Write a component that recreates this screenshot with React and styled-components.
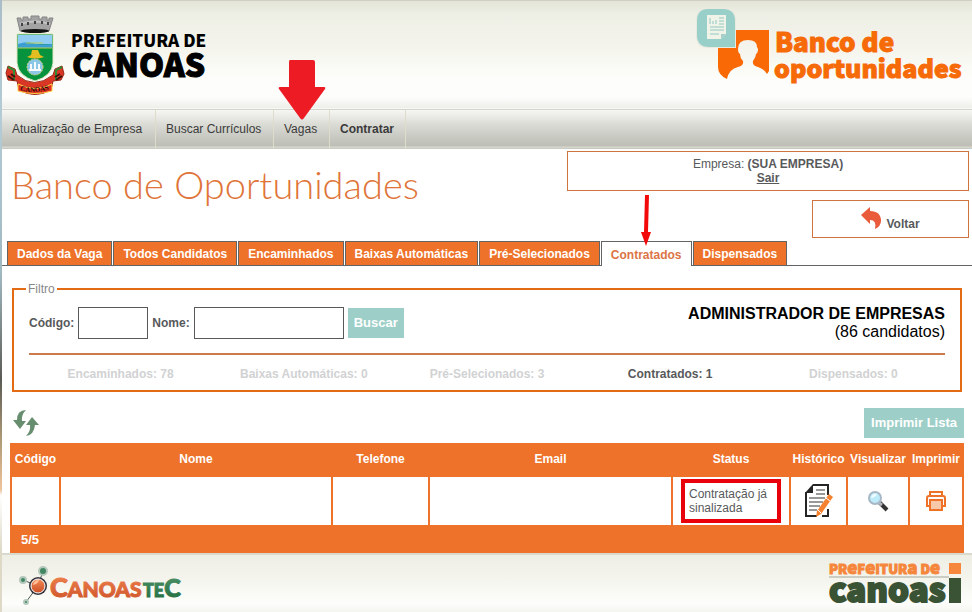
import React from "react";
import styled, { createGlobalStyle, css } from "styled-components";

const orange = "#ee7229";
const teal = "#9dcfc8";
const logoFont = '"Noto Sans CJK SC", "Open Sans", sans-serif';

const GlobalStyle = createGlobalStyle`
  * { box-sizing: border-box; }
  body {
    margin: 0;
    background: #fff;
    color: #58595b;
    font: 12px/14px "Liberation Sans", Arial, sans-serif;
  }
`;

const Page = styled.div`
  min-height: 100vh;
  padding-left: 2px;
  display: flex;
  flex-direction: column;
  background: linear-gradient(
      #a9bdc9 0%, #b5ccd6 20%, #9fb7bf 45%, #5b5b55 62%, #b09a78 72%, #efc49c 80%, #fff 81%, #ddd9c6 90%
    ) left / 2px 100% no-repeat, #fff;
`;

const Header = styled.header`
  height: 110px;
  padding: 0 8px 0 2px;
  display: flex;
  justify-content: space-between;
  border-top: 1px solid #cfcfc6;
  border-bottom: 1px solid #d4d4ca;
  background: linear-gradient(#e4e5d8 0, #edeee4 12px, #f4f4ec 45px, #fdfdfb 78px, #fdfdfc 96px, #eeeeea 107px, #fff 108px);
`;

const LogoLink = styled.a`
  display: block;
  line-height: 0;
`;

const Drawing = styled.svg`
  display: block;
  overflow: visible;
`;

const Nav = styled.nav`
  height: 39px;
  display: flex;
  background: linear-gradient(#f6f6f4 0, #deded9 13px, #cfd0c9 22px, #bebfb6 35px, #bebfb6 36px, #d9dad2 37px, #c5c6be 39px);
`;

const NavLink = styled.a`
  position: relative;
  min-width: ${(p) => p.$width}px;
  padding: 12px 10px 0;
  border-right: 1px solid #deddca;
  color: #3b3b3b;
  text-decoration: none;
  font-weight: ${(p) => (p.$bold ? "bold" : "normal")};
`;

const Pointer = styled.svg`
  position: absolute;
  left: 50%;
  bottom: ${(p) => p.$bottom};
  transform: translateX(-50%);
  pointer-events: none;
`;

const Main = styled.main`
  padding-top: 2px;
`;

const Intro = styled.section`
  display: flex;
  justify-content: space-between;
  padding: 0 3px 0 9px;
  height: 90px;
`;

const Title = styled.h1`
  margin: 13px 0 0;
  color: #e07438;
  font: 300 38px/40px Lato, sans-serif;
  white-space: nowrap;
`;

const Account = styled.div`
  flex: 0 1 402px;
  display: flex;
  flex-direction: column;
  align-items: flex-end;
  gap: 9px;
`;

const outlined = css`
  border: 1px solid #d0743f;
  background: #fff;
  color: #58595b;
`;

const Company = styled.div`
  ${outlined}
  width: 100%;
  height: 40px;
  padding-top: 5px;
  text-align: center;
`;

const Logout = styled.a`
  color: inherit;
  font-weight: bold;
`;

const BackButton = styled.button`
  ${outlined}
  width: 157px;
  height: 38px;
  padding: 0;
  display: flex;
  justify-content: center;
  align-items: center;
  gap: 4px;
  font: bold 12px/14px "Liberation Sans", Arial, sans-serif;
  cursor: pointer;
`;

const BackLabel = styled.span`
  padding-top: 10px;
`;

const Tabs = styled.nav`
  display: flex;
  gap: 1px;
  padding-left: 5px;
  border-bottom: 1px solid #636466;
`;

const Tab = styled.a`
  position: relative;
  height: 24px;
  padding: 5px 9px 0;
  border: 1px solid #636466;
  border-bottom: 0;
  background: ${orange};
  color: #fff;
  font-weight: bold;
  text-decoration: none;
  white-space: nowrap;
  ${(p) =>
    p.$active &&
    css`
      height: 25px;
      margin-bottom: -1px;
      padding-top: 6px;
      background: #fff;
      color: #dc7446;
    `}
`;

const Filter = styled.fieldset`
  margin: 16px 10px 0;
  min-width: 0;
  padding: 0 15px 9px;
  border: 2px solid #e36b14;
`;

const Legend = styled.legend`
  margin-left: -3px;
  padding: 0 2px;
  color: #87888a;
`;

const FilterRow = styled.div`
  display: flex;
  justify-content: space-between;
  padding: 9px 0 12px;
  border-bottom: 2px solid #cb7a4c;
`;

const Form = styled.form`
  display: flex;
  align-items: center;
  gap: 4px;
`;

const Label = styled.label`
  font-weight: bold;
`;

const TextBox = styled.input`
  width: ${(p) => p.$width}px;
  height: 32px;
  padding: 4px;
  border: 1px solid #58595b;
  font: inherit;
`;

const ActionButton = styled.button`
  height: 30px;
  padding: 0 6px;
  border: 0;
  background: ${teal};
  color: #fff;
  font: bold 13px/16px "Liberation Sans", Arial, sans-serif;
  cursor: pointer;
`;

const PrintButton = styled(ActionButton)`
  min-width: 100px;
`;

const Job = styled.div`
  color: #000;
  font-size: 16px;
  line-height: 18px;
  text-align: right;
`;

const JobName = styled.strong`
  display: block;
`;

const Counts = styled.ul`
  list-style: none;
  margin: 0;
  padding: 12px 0 0;
  display: grid;
  grid-template-columns: repeat(5, 1fr);
  text-align: center;
  font-weight: bold;
`;

const Count = styled.li`
  color: ${(p) => (p.$active ? "#58595b" : "#d1d2d3")};
`;

const Toolbar = styled.div`
  display: flex;
  align-items: center;
  justify-content: space-between;
  padding: 16px 8px 5px 11px;
`;

const IconButton = styled.button`
  display: inline-block;
  padding: 0;
  border: 0;
  background: none;
  vertical-align: middle;
  line-height: 0;
  cursor: pointer;
`;

const TableFrame = styled.div`
  padding: 0 8px;
`;

const Table = styled.table`
  width: 100%;
  table-layout: fixed;
  border-collapse: collapse;
  background: ${orange};
`;

const Column = styled.col`
  width: ${(p) => (p.$width ? `${p.$width}px` : "auto")};
`;

const Heading = styled.th`
  height: 33px;
  padding: 0;
  color: #fff;
  white-space: nowrap;
`;

const Cell = styled.td`
  height: 50px;
  padding: 0 8px;
  border: 2px solid ${orange};
  background: #fff;
  text-align: ${(p) => (p.$icon ? "center" : "left")};
  ${(p) => p.$icon && "padding: 0;"}
`;

const Status = styled.span`
  display: block;
  width: 100px;
  padding: 4px;
  border: 4px solid #e8000b;
`;

const Total = styled.td`
  height: 27px;
  padding: 0 10px;
  color: #fff;
  font-size: 13px;
  font-weight: bold;
`;

const Footer = styled.footer`
  flex: 1;
  min-height: 59px;
  padding: 0 10px 0 16px;
  display: flex;
  justify-content: space-between;
  border-top: 2px solid #d9dacd;
  background: linear-gradient(#edeee4, #f4f4ed 40%, #fdfdfb 85%, #f4f4f0);
`;

function CityLogo() {
  return (
    <Drawing width="204" height="100" viewBox="4 1 204 100" role="img" aria-label="Prefeitura de Canoas">
      <path d="M20 31 L17 18 h4 v2 h2 v-3 h5 v2 h3 v-3 h8 v3 h3 v-2 h5 v3 h2 v-2 h4 L49 31Z" fill="#a3a3a3" stroke="#858585" />
      <path d="M20 24 q15 -5 30 0" fill="none" stroke="#c4c4c4" strokeWidth="2" />
      <path d="M22 23v3m6-4v3m7-4v3m7-3v3m6-2v3" stroke="#444" strokeWidth="2" />
      <ellipse cx="35" cy="31" rx="14" ry="2" fill="#111" />
      <path d="M6 73 l2 -7 7 3 2 6 q17 15 36 0 l2 -6 7 -3 2 8 -3 6 -8 1 -2 9 q-16 9 -32 0 l-2 -9 -9 -1Z" fill="#d93625" stroke="#9b2a16" />
      <path d="M8 67 l6 3 v10 m48-13 -6 3 v10" fill="none" stroke="#328b35" strokeWidth="2" />
      <path d="M17 34h36v29q-1 13-18 18-17-5-18-18Z" fill="#07923d" stroke="#dfe7bb" />
      <path d="M18 35h34v9H18Z" fill="#91cdf3" />
      <path d="M18 44q8-3 14-1t20 1v4H18Z" fill="#3b9fd1" />
      <path d="M26 43h17M18 48h34" stroke="#b2ce57" strokeWidth="1" />
      <path d="M32 50h6l2 5 4 2q-9 3-17 0l4-2Z" fill="#e4bd20" />
      <circle cx="35" cy="67" r="8" fill="#8bc7e6" stroke="#d7cf75" strokeDasharray="2 1" />
      <path d="M31 70v-6m4 6v-8m4 8v-6M29 70h12" stroke="#f8fcff" strokeWidth="2" />
      <path d="M18 84q17 9 34 0v7q-17 5-34 0Z" fill="#e12f22" stroke="#ffd54a" />
      <path id="city-ribbon" d="M19 90q16 5 34-2" fill="none" />
      <text fontFamily="Liberation Serif, serif" fontSize="7" fontWeight="bold" fill="#241008">
        <textPath href="#city-ribbon" startOffset="1">CANOAS</textPath>
      </text>
      <path d="M8 76l6 4m1-3-4-3m51 2-6 4m-1-3 5-3" stroke="#3d120b" strokeWidth="2" />
      <g fill="#000" stroke="#000" fontFamily={logoFont} fontWeight="900">
        <text x="71" y="47" fontSize="17" strokeWidth="0">PREFEITURA DE</text>
        <text x="72" y="77" fontSize="32" strokeWidth="1">CANOAS</text>
      </g>
    </Drawing>
  );
}

function PortalLogo() {
  return (
    <Drawing width="267" height="80" viewBox="697 1 267 80" role="img" aria-label="Banco de oportunidades">
      <path d="M718 30h51v41l-2 3q-3-5-9-7-6-1-5-6 3-4 3-7 2-1 2-5l-1-2q0-7-9-7-10 0-10 9 0 4 2 5 0 4 3 7 1 5-5 6-9 2-11 12-9-4-9-12Z" fill="#f96a06" />
      <path d="M708 8h16q12 0 12 12v28h-28q-12 0-12-12V20q0-12 12-12Z" fill="#e8eadf" />
      <path d="M708 9h15q12 0 12 12v26h-26q-12 0-12-12V21q0-12 11-12Z" fill="#98cfc8" />
      <path d="M707 15h19v19l-5 5h-14Z" fill="#eff3e8" />
      <path d="M710 18v6m3-3v3m3-4v4m3-6h5m-5 3h5m-5 3h5m-14 3h14m-14 3h14m-14 4h9" fill="none" stroke="#91c9c2" />
      <path d="M721 39v-5h5Z" fill="#a7cec6" />
      <g fill="#f66a08" stroke="#f66a08" strokeWidth="1" fontFamily={logoFont} fontWeight="900">
        <text x="775" y="52" fontSize="26">Banco de</text>
        <text x="774" y="78" fontSize="25">oportunidades</text>
      </g>
    </Drawing>
  );
}

function TecLogo() {
  return (
    <Drawing width="164" height="57" viewBox="18 555 164 57" role="img" aria-label="CanoasTec">
      <defs>
        <linearGradient id="tec-orange" x1="0" y1="0" x2="0" y2="1">
          <stop stopColor="#f48b55" /><stop offset="1" stopColor="#cc4f25" />
        </linearGradient>
        <linearGradient id="tec-green" x1="0" y1="0" x2="0" y2="1">
          <stop stopColor="#53946b" /><stop offset="1" stopColor="#206c40" />
        </linearGradient>
      </defs>
      <path d="M38 586 43 571M38 586 23 580M38 586 26 602" stroke="#4b5650" />
      <circle cx="38" cy="586" r="9" fill="#34333b" />
      <circle cx="38" cy="586" r="7" fill="url(#tec-orange)" stroke="#fff" />
      <path d="M33 585q1-5 6-5-1 4-6 5" fill="#ffc29d" />
      <g fill="#418764" stroke="#b4c8bb" strokeWidth="2">
        <circle cx="43" cy="571" r="4" /><circle cx="23" cy="580" r="3" /><circle cx="26" cy="602" r="2" />
      </g>
      <g fontFamily="Lato, sans-serif" fontWeight="900" strokeWidth="1">
        <text x="50" y="597" fill="url(#tec-orange)" stroke="url(#tec-orange)">
          <tspan fontSize="27">C</tspan><tspan fontSize="21">ANOAS</tspan>
        </text>
        <text x="143" y="597" fill="url(#tec-green)" stroke="url(#tec-green)">
          <tspan fontSize="18">TE</tspan><tspan fontSize="25">C</tspan>
        </text>
      </g>
    </Drawing>
  );
}

function CityFooterLogo() {
  return (
    <Drawing width="134" height="57" viewBox="828 555 134 57" role="img" aria-label="Prefeitura de Canoas">
      <g fontFamily={logoFont} fontWeight="900">
        <text x="829" y="574" fontSize="13" fill="#f5863b" stroke="#f5863b" strokeWidth="1">
          PR<tspan fontSize="17">e</tspan>F<tspan fontSize="17">e</tspan>ITUR<tspan fontSize="17">a</tspan> D<tspan fontSize="17">e</tspan>
        </text>
        <text x="829" y="602" fontSize="33" fill="#3b5335" stroke="#3b5335" strokeWidth="2">canoas</text>
      </g>
      <path d="M829 577h120" stroke="#a2a69a" />
      <path d="M949 563h12v11h-12Z" fill="#f5863b" />
      <path d="M949 578h12v25h-12Z" fill="#3b5335" />
    </Drawing>
  );
}

const BigArrow = () => (
  <Pointer $bottom="29px" width="48" height="60" viewBox="0 0 48 60" aria-hidden="true">
    <path d="M12 0h23q2 0 2 2v25h9q2 0 1 2L26 58q-2 3-4 0L1 29q-1-2 1-2h9V2q0-2 1-2Z" fill="#ed1c24" />
  </Pointer>
);

const ThinArrow = () => (
  <Pointer $bottom="20px" width="10" height="51" viewBox="0 0 10 51" aria-hidden="true">
    <path d="M4 0h4L7 37h3L5 51 0 37h3Z" fill="#f20a0a" />
  </Pointer>
);

const BackIcon = () => (
  <svg width="21" height="24" viewBox="0 0 21 24" aria-hidden="true">
    <path d="M0 8 9 0v4q11 0 11 10 0 5-6 8 2-9-5-9v4Z" fill="#ea5b3b" />
  </svg>
);

const RefreshIcon = () => (
  <svg width="26" height="26" viewBox="0 0 26 26" aria-hidden="true">
    <path d="M13 0Q4 0 4 10H0l7 9 6-8H9Q8 5 13 0ZM13 26q8-1 9-11h4L19 7l-6 8h4q1 6-4 11Z" fill="#688e70" />
  </svg>
);

const HistoryIcon = () => (
  <svg width="28" height="34" viewBox="0 0 28 34" aria-hidden="true">
    <path d="M8 1h15v31H1V9Z" fill="#fff" />
    <path d="M8 1h15v10M1 8v24h11m5 0h6v-7" fill="none" stroke="#252525" strokeWidth="2" />
    <path d="M0 9 8 0v9Z" fill="#252525" />
    <path d="M11 6h9m-9 4h9M4 14h16M4 18h14M4 22h11M4 26h8" stroke="#333" strokeWidth="1" />
    <path d="m24 10 4 3-12 17-5 3 1-6Z" fill="#f58230" />
    <path d="m21 14 4 3M13 26l3 3" stroke="#fff" />
  </svg>
);

const ViewIcon = () => (
  <svg width="22" height="22" viewBox="0 0 22 22" aria-hidden="true">
    <path d="m12 12 8 8" stroke="#343434" strokeWidth="4" />
    <path d="m11 12 4 3" stroke="#b2b7bd" strokeWidth="3" />
    <circle cx="8" cy="8" r="6" fill="#bdebfa" stroke="#a8b7c6" strokeWidth="2" />
    <path d="M4 8q1-5 6-4-1 3-6 4Z" fill="#effbff" />
  </svg>
);

const PrintIcon = () => (
  <svg width="20" height="20" viewBox="0 0 20 20" fill="none" stroke="#ee7228" strokeWidth="2" aria-hidden="true">
    <path d="M4 5V1h12v4" />
    <path d="M4 15H1V7q0-2 2-2h14q2 0 2 2v8h-3" />
    <path d="M4 9h12v10H4Z" fill="#f9c8a9" />
  </svg>
);

const navItems = [
  { label: "Atualização de Empresa", width: 154 },
  { label: "Buscar Currículos", width: 118 },
  { label: "Vagas", width: 56, arrow: true },
  { label: "Contratar", width: 76, bold: true },
];

const tabs = ["Dados da Vaga", "Todos Candidatos", "Encaminhados", "Baixas Automáticas", "Pré-Selecionados", "Contratados", "Dispensados"];

const counts = ["Encaminhados: 78", "Baixas Automáticas: 0", "Pré-Selecionados: 3", "Contratados: 1", "Dispensados: 0"];

const columns = [
  ["Código", 49],
  ["Nome", null],
  ["Telefone", 97],
  ["Email", 243],
  ["Status", 118],
  ["Histórico", 57],
  ["Visualizar", 62],
  ["Imprimir", 54],
];

export default function App() {
  return (
    <Page>
      <GlobalStyle />
      <Header>
        <LogoLink href="#"><CityLogo /></LogoLink>
        <LogoLink href="#"><PortalLogo /></LogoLink>
      </Header>
      <Nav>
        {navItems.map((item) => (
          <NavLink key={item.label} href="#" $width={item.width} $bold={item.bold}>
            {item.label}
            {item.arrow && <BigArrow />}
          </NavLink>
        ))}
      </Nav>
      <Main>
        <Intro>
          <Title>Banco de Oportunidades</Title>
          <Account>
            <Company>
              Empresa: <strong>(SUA EMPRESA)</strong>
              <br />
              <Logout href="#">Sair</Logout>
            </Company>
            <BackButton type="button">
              <BackIcon />
              <BackLabel>Voltar</BackLabel>
            </BackButton>
          </Account>
        </Intro>
        <Tabs>
          {tabs.map((tab) => (
            <Tab key={tab} href="#" $active={tab === "Contratados"}>
              {tab}
              {tab === "Contratados" && <ThinArrow />}
            </Tab>
          ))}
        </Tabs>
        <Filter>
          <Legend>Filtro</Legend>
          <FilterRow>
            <Form onSubmit={(e) => e.preventDefault()}>
              <Label htmlFor="codigo">Código:</Label>
              <TextBox id="codigo" $width={70} />
              <Label htmlFor="nome">Nome:</Label>
              <TextBox id="nome" $width={150} />
              <ActionButton type="submit">Buscar</ActionButton>
            </Form>
            <Job>
              <JobName>ADMINISTRADOR DE EMPRESAS</JobName>
              (86 candidatos)
            </Job>
          </FilterRow>
          <Counts>
            {counts.map((count) => (
              <Count key={count} $active={count.startsWith("Contratados")}>{count}</Count>
            ))}
          </Counts>
        </Filter>
        <Toolbar>
          <IconButton type="button" aria-label="Atualizar"><RefreshIcon /></IconButton>
          <PrintButton type="button">Imprimir Lista</PrintButton>
        </Toolbar>
        <TableFrame>
          <Table>
            <colgroup>
              {columns.map(([name, width]) => <Column key={name} $width={width} />)}
            </colgroup>
            <thead>
              <tr>
                {columns.map(([name]) => <Heading key={name} scope="col">{name}</Heading>)}
              </tr>
            </thead>
            <tbody>
              <tr>
                <Cell />
                <Cell />
                <Cell />
                <Cell />
                <Cell><Status>Contratação já sinalizada</Status></Cell>
                <Cell $icon><IconButton type="button" aria-label="Histórico"><HistoryIcon /></IconButton></Cell>
                <Cell $icon><IconButton type="button" aria-label="Visualizar"><ViewIcon /></IconButton></Cell>
                <Cell $icon><IconButton type="button" aria-label="Imprimir"><PrintIcon /></IconButton></Cell>
              </tr>
            </tbody>
            <tfoot>
              <tr><Total colSpan={8}>5/5</Total></tr>
            </tfoot>
          </Table>
        </TableFrame>
      </Main>
      <Footer>
        <LogoLink href="#"><TecLogo /></LogoLink>
        <LogoLink href="#"><CityFooterLogo /></LogoLink>
      </Footer>
    </Page>
  );
}
